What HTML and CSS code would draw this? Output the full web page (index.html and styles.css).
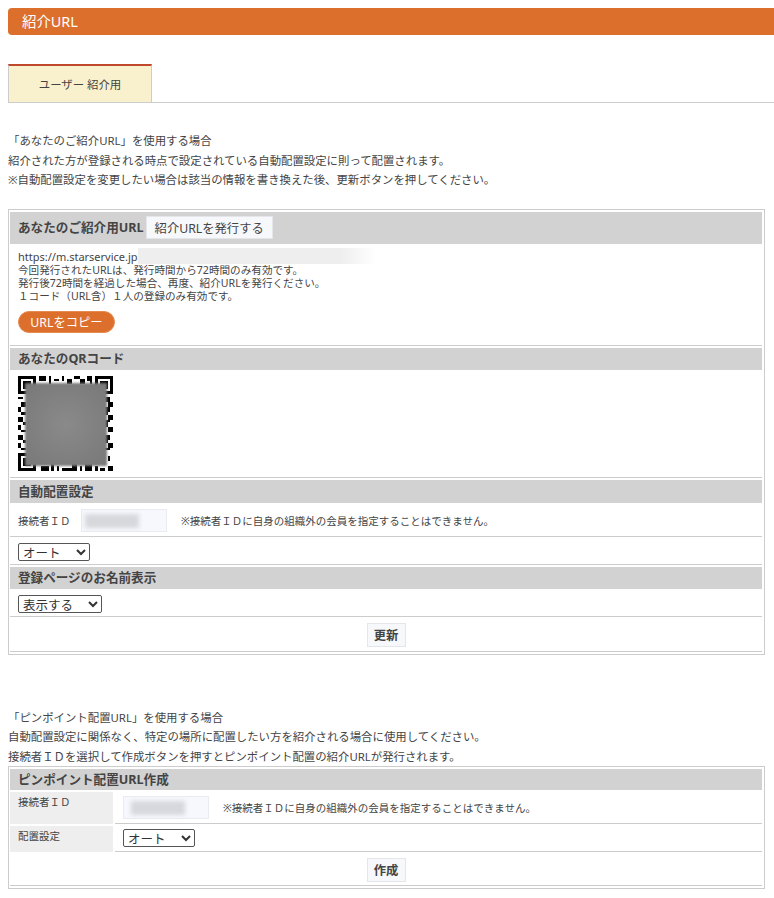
FILE: index.html
```html
<!DOCTYPE html>
<html lang="ja">
<head>
  <meta charset="UTF-8">
  <title>紹介URL</title>
  <link rel="stylesheet" href="styles.css">
</head>
<body>

  <h1 class="page-title">紹介URL</h1>

  <div class="tabs">
    <div class="tab">ユーザー 紹介用</div>
  </div>

  <!-- auto placement -->
  <div class="intro intro-first">
    <p>「あなたのご紹介URL」を使用する場合</p>
    <p>紹介された方が登録される時点で設定されている自動配置設定に則って配置されます。</p>
    <p>※自動配置設定を変更したい場合は該当の情報を書き換えた後、更新ボタンを押してください。</p>
  </div>

  <div class="box box-first">
    <div class="head head-url">あなたのご紹介用URL<button class="btn btn-head">紹介URLを発行する</button></div>
    <div class="row row-url">
      <div class="url-line">https://m.starservice.jp<span class="url-mask"></span></div>
      <div>今回発行されたURLは、発行時間から72時間のみ有効です。</div>
      <div>発行後72時間を経過した場合、再度、紹介URLを発行ください。</div>
      <div>１コード（URL含）１人の登録のみ有効です。</div>
      <button class="btn-copy">URLをコピー</button>
    </div>

    <div class="head">あなたのQRコード</div>
    <div class="row row-qr">
      <div class="qr">
        <svg width="95" height="95" viewBox="0 0 37 37" shape-rendering="crispEdges">
          <path fill="#000" fill-rule="evenodd" d="M0 0h7v7h-7zM1 1v5h5v-5zM2 2h3v3h-3z"/>
          <path fill="#000" fill-rule="evenodd" d="M30 0h7v7h-7zM31 1v5h5v-5zM32 2h3v3h-3z"/>
          <path fill="#000" fill-rule="evenodd" d="M0 30h7v7h-7zM1 31v5h5v-5zM2 32h3v3h-3z"/>
          <path fill="#000" d="M8 0h3v2h-3zM12 0h1v3h-1zM14 1h2v1h-2zM17 0h1v2h-1zM19 1h2v2h-2zM22 0h2v1h-2zM24 1h2v2h-2zM27 0h2v2h-2zM28 2h1v1h-1z"/>
          <path fill="#000" d="M0 8h2v1h-2zM1 10h2v2h-2zM0 12h1v2h-1zM1 14h2v1h-2zM0 16h2v2h-2zM2 18h1v1h-1zM0 19h1v2h-1zM1 21h2v1h-2zM0 23h2v2h-2zM2 25h1v1h-1zM0 26h1v2h-1zM1 28h2v1h-2z"/>
          <path fill="#000" d="M33 8h3v2h-3zM35 10h2v2h-2zM34 12h2v2h-2zM33 14h2v1h-2zM35 15h2v2h-2zM34 17h2v1h-2zM33 18h2v2h-2zM35 20h2v2h-2zM34 23h2v2h-2zM33 25h2v1h-2zM35 26h2v2h-2zM33 28h3v1h-3zM35 31h1v2h-1z"/>
          <path fill="#000" d="M9 35h3v2h-3zM13 34h1v3h-1zM15 35h1v2h-1zM17 36h4v1h-4zM21 34h2v3h-2zM24 35h1v2h-1zM26 34h3v3h-3zM30 35h1v2h-1zM32 36h2v1h-2zM35 35h2v2h-2z"/>
        </svg>
        <div class="qr-mask"></div>
      </div>
    </div>

    <div class="head head-auto">自動配置設定</div>
    <div class="row row-id">
      <span class="label-inline">接続者ＩＤ</span>
      <span class="id-input"><span class="id-mask"></span></span>
      <span class="note">※接続者ＩＤに自身の組織外の会員を指定することはできません。</span>
    </div>
    <div class="row row-select">
      <select class="sel sel-auto"><option>オート</option></select>
    </div>

    <div class="head">登録ページのお名前表示</div>
    <div class="row row-select">
      <select class="sel sel-show"><option>表示する</option></select>
    </div>
    <div class="row row-submit"><button class="btn">更新</button></div>
  </div>

  <!-- pinpoint placement -->
  <div class="intro intro-second">
    <p>「ピンポイント配置URL」を使用する場合</p>
    <p>自動配置設定に関係なく、特定の場所に配置したい方を紹介される場合に使用してください。</p>
    <p>接続者ＩＤを選択して作成ボタンを押すとピンポイント配置の紹介URLが発行されます。</p>
  </div>

  <div class="box">
    <div class="head head-pin">ピンポイント配置URL作成</div>
    <div class="pair pair-id">
      <div class="pair-label">接続者ＩＤ</div>
      <div class="pair-value">
        <span class="id-input"><span class="id-mask id-mask-right"></span></span>
        <span class="note">※接続者ＩＤに自身の組織外の会員を指定することはできません。</span>
      </div>
    </div>
    <div class="pair pair-place">
      <div class="pair-label">配置設定</div>
      <div class="pair-value">
        <select class="sel sel-auto"><option>オート</option></select>
      </div>
    </div>
    <div class="row row-submit row-submit-pin"><button class="btn">作成</button></div>
  </div>

</body>
</html>
```

FILE: styles.css
```css
body {
  margin: 0;
  padding: 8px 0 0 8px;
  font-family: 'Noto Sans', 'Noto Sans CJK JP', sans-serif;
  font-size: 11.4px;
  color: #444;
  background: #fff;
  overflow: hidden;
}
p {
  margin: 0;
}
.page-title {
  margin: 0;
  height: 27px;
  padding-left: 14px;
  background: #dd6f2c;
  border-radius: 4px 0 0 4px;
  color: #fff;
  font-size: 14.4px;
  font-weight: normal;
  line-height: 28px;
}
.tabs {
  margin-top: 29px;
  height: 38px;
  border-bottom: 1px solid #ccc;
}
.tab {
  box-sizing: border-box;
  width: 144px;
  height: 39px;
  padding-top: 4px;
  background: #f9f1cd;
  border: 1px solid #ccc;
  border-top: 2px solid #c0492b;
  text-align: center;
  line-height: 30px;
}
.intro p {
  line-height: 19.6px;
}
.intro-first {
  margin-top: 28px;
}
.intro-second {
  height: 58px;
  margin-top: 53px;
}
.box {
  box-sizing: border-box;
  width: 757px;
  padding: 2px 2px 2px 1px;
  border: 1px solid #ccc;
  display: flex;
  flex-direction: column;
  gap: 2px;
}
.box-first {
  margin-top: 19px;
}
.head {
  height: 22px;
  padding-left: 8px;
  background: #d2d2d2;
  font-size: 12.6px;
  font-weight: bold;
  line-height: 22px;
}
.head-url {
  height: 32px;
  line-height: 32px;
  display: flex;
  align-items: center;
}
.head-auto {
  height: 23px;
  line-height: 23px;
}
.head-pin {
  height: 21px;
  line-height: 21px;
}
.row {
  padding-left: 8px;
  border-bottom: 1px solid #ccc;
}
.row-url {
  height: 102px;
  margin-top: -2px;
  padding-top: 3px;
  box-sizing: border-box;
  font-size: 10.6px;
  line-height: 13.2px;
}
.url-line {
  height: 14px;
  padding-top: 3px;
  display: flex;
  font-size: 11px;
}
.url-mask {
  width: 238px;
  height: 16px;
  margin-top: -2px;
  background: linear-gradient(to right, #eee 85%, #fff);
}
.btn {
  height: 24px;
  padding: 0 8px;
  background: #f6f8fb;
  border: 1px solid #e4e6ea;
  color: #444;
  font-family: inherit;
  font-size: 12.3px;
  font-weight: bold;
}
.btn-head {
  height: 23px;
  margin-left: 2px;
  font-weight: normal;
}
.btn-copy {
  display: block;
  width: 97px;
  height: 22px;
  margin-top: 8px;
  padding: 0;
  background: #dd6f2c;
  border: 1px solid #e58a52;
  border-radius: 11px;
  color: #fff;
  font-family: inherit;
  font-size: 12.3px;
}
.row-qr {
  height: 106px;
  box-sizing: border-box;
  padding-top: 4px;
}
.qr {
  position: relative;
  width: 95px;
  height: 95px;
}
.qr svg {
  display: block;
}
.qr-mask {
  position: absolute;
  left: 7px;
  top: 7px;
  width: 82px;
  height: 83px;
  background: radial-gradient(circle, #8a8a8a, #787878);
  filter: blur(1px);
}
.row-id {
  height: 32px;
  box-sizing: border-box;
  display: flex;
  align-items: center;
  font-size: 10.5px;
}
.label-inline {
  width: 63px;
}
.id-input {
  box-sizing: border-box;
  width: 86px;
  height: 23px;
  padding: 4px 3px;
  background: #f6f8fd;
  border: 1px solid #e8ebf0;
  display: inline-block;
}
.id-mask {
  display: block;
  width: 54px;
  height: 14px;
  background: #d6d8dc;
  filter: blur(2px);
}
.id-mask-right {
  margin-left: 4px;
}
.note {
  margin-left: 14px;
  font-size: 10.5px;
}
.row-select {
  height: 26px;
  box-sizing: border-box;
  padding-top: 4px;
}
.sel {
  display: block;
  height: 18px;
  padding: 0;
  background: #fff;
  border: 1px solid #555;
  border-radius: 2px;
  color: #333;
  font-family: inherit;
  font-size: 12.5px;
}
.sel-auto {
  width: 72px;
}
.sel-show {
  width: 84px;
}
.row-submit {
  height: 33px;
  box-sizing: border-box;
  padding: 4px 0 0;
  text-align: center;
}
.row-submit-pin {
  height: 32px;
}
.row-submit .btn {
  width: 39px;
  padding: 0;
}
.pair {
  display: flex;
  gap: 2px;
}
.pair-id {
  height: 32px;
}
.pair-place {
  height: 26px;
}
.pair-label {
  box-sizing: border-box;
  width: 103px;
  padding: 2px 0 0 8px;
  background: #eee;
  font-size: 10.5px;
}
.pair-value {
  flex: 1;
  box-sizing: border-box;
  padding-left: 8px;
  border-bottom: 1px solid #ccc;
  display: flex;
  align-items: center;
}
```
